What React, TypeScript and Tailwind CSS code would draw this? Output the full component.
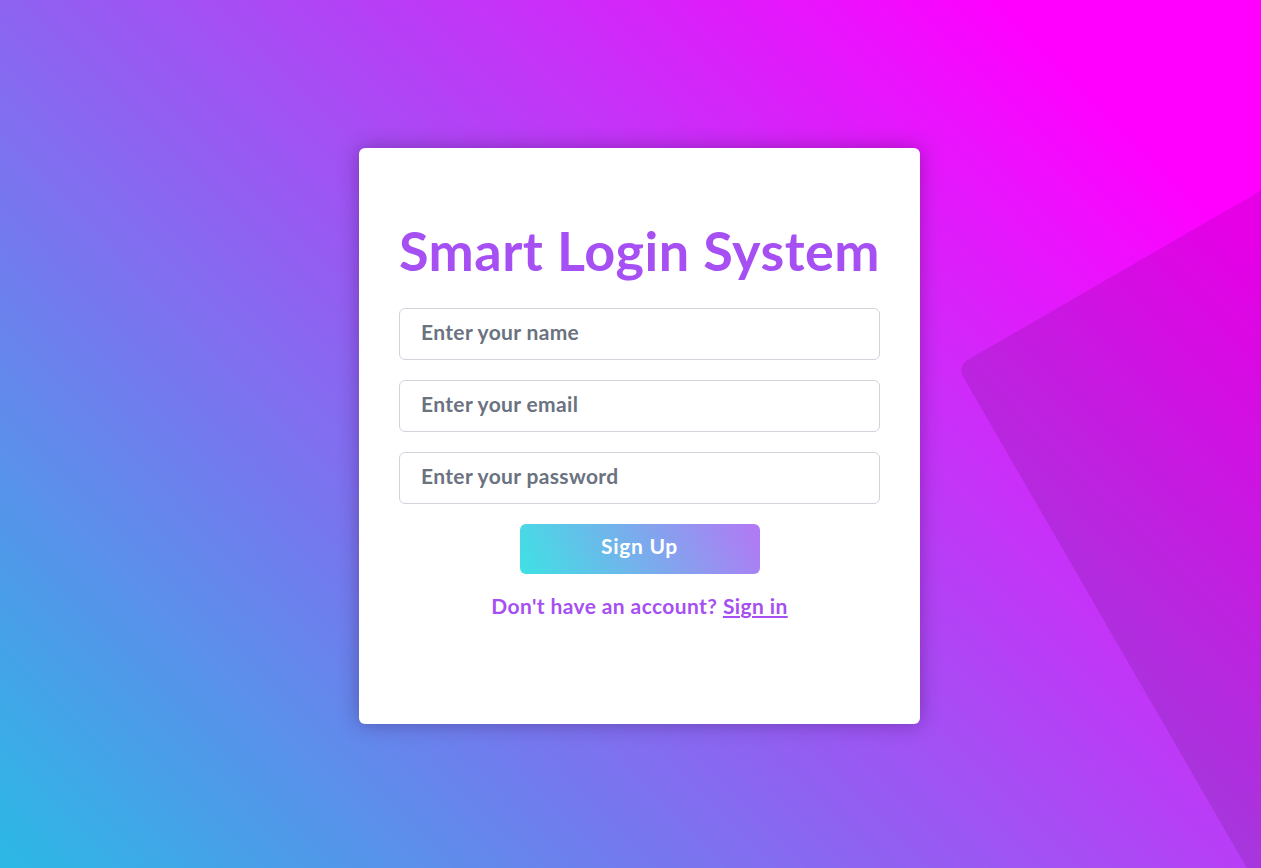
import React from "react";

export default function App() {
  return (
    <div className="relative w-full h-[868px] overflow-hidden bg-[linear-gradient(45deg,#2bb9e5,#ff00ff_88%)] flex items-start justify-center font-['Lato',sans-serif]">
      <div className="absolute left-[957px] top-[366px] w-[900px] h-[900px] origin-top-left -rotate-30 rounded-[12px] bg-black/10" />
      <div className="relative mt-[148px] ml-[18px] w-[561px] h-[576px] bg-white rounded-[6px] shadow-[0_0_20px_rgba(40,0,60,0.35)] flex flex-col items-center px-10 pt-[71px]">
        <h1 className="text-[54px] leading-[64px] font-bold tracking-[0.5px] text-[#a64ff2] whitespace-nowrap">Smart Login System</h1>
        <div className="mt-[25px] w-full flex flex-col gap-5">
          <input
            placeholder="Enter your name"
            className="w-full h-[52px] border border-[#d1d5db] rounded-[6px] pl-[21px] pb-[6px] text-[21px] font-bold tracking-[0.35px] text-[#374151] placeholder:text-[#6b7280] outline-none"
          />
          <input
            placeholder="Enter your email"
            className="w-full h-[52px] border border-[#d1d5db] rounded-[6px] pl-[21px] pb-[6px] text-[21px] font-bold tracking-[0.35px] text-[#374151] placeholder:text-[#6b7280] outline-none"
          />
          <input
            placeholder="Enter your password"
            className="w-full h-[52px] border border-[#d1d5db] rounded-[6px] pl-[21px] pb-[6px] text-[21px] font-bold tracking-[0.35px] text-[#374151] placeholder:text-[#6b7280] outline-none"
          />
        </div>
        <button className="mt-5 w-[240px] h-[50px] rounded-[6px] bg-[linear-gradient(60deg,#3ee2e4,#b477f5)] text-white text-[21px] font-bold tracking-[0.7px] pb-[6px]">
          Sign Up
        </button>
        <p className="mt-[18px] text-[21px] leading-[28px] font-bold tracking-[0.4px] text-[#a64ff2]">
          Don't have an account? <a className="underline">Sign in</a>
        </p>
      </div>
    </div>
  );
}
